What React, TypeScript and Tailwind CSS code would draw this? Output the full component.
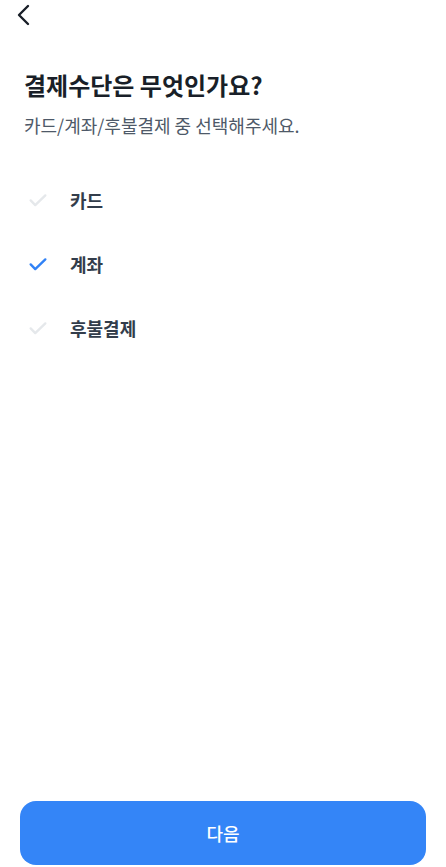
import React from "react";

const Check = ({ active }: { active: boolean }) => (
  <svg width="22" height="22" viewBox="0 0 24 24" fill="none">
    <path d="M4 12.5l5 5L20 7" stroke={active ? "#3182f6" : "#e5e8eb"} strokeWidth="2.6" strokeLinecap="round" strokeLinejoin="round" />
  </svg>
);

export default function App() {
  const items = [
    { label: "카드", active: false },
    { label: "계좌", active: true },
    { label: "후불결제", active: false },
  ];
  return (
    <div className="relative w-[446px] h-[867px] bg-white flex flex-col" style={{ fontFamily: '"Noto Sans CJK KR", "Noto Sans", sans-serif' }}>
      <div className="h-[32px] pl-[14px] pt-[3px]">
        <svg width="20" height="24" viewBox="0 0 20 24" fill="none">
          <path d="M14 3L5 12l9 9" stroke="#191f28" strokeWidth="2.4" strokeLinecap="round" strokeLinejoin="round" />
        </svg>
      </div>
      <div className="px-[24px] pt-[37px]">
        <h1 className="text-[24px] leading-[32px] font-bold text-[#191f28]">결제수단은 무엇인가요?</h1>
        <p className="mt-[11px] text-[18px] leading-[27px] text-[#4e5968]">카드/계좌/후불결제 중 선택해주세요.</p>
      </div>
      <ul className="mt-[41px] flex flex-col gap-[24px] px-[27px]">
        {items.map((it) => (
          <li key={it.label} className="flex items-center h-[40px]">
            <Check active={it.active} />
            <span className="ml-[21px] text-[18px] font-semibold text-[#333d4b]">{it.label}</span>
          </li>
        ))}
      </ul>
      <div className="flex-1" />
      <div className="px-[20px] pb-[2px]">
        <button className="w-full h-[64px] rounded-[16px] bg-[#3485f7] text-white text-[18px] font-medium">다음</button>
      </div>
    </div>
  );
}
